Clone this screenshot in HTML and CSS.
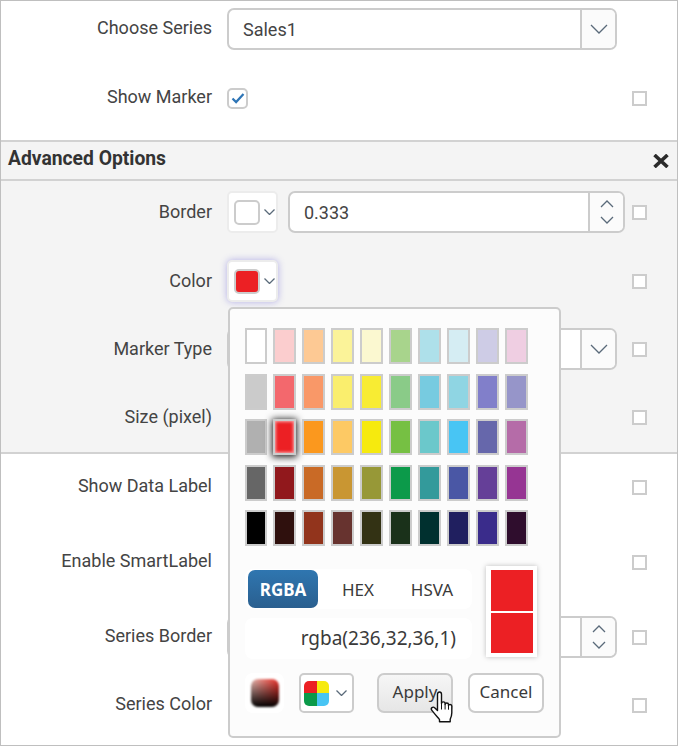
FILE: index.html
```html
<!DOCTYPE html>
<html lang="en">
<head>
    <meta charset="UTF-8">
    <meta name="viewport" content="width=device-width, initial-scale=1.0">
    <title>Series Options</title>
    <link rel="stylesheet" href="styles.css">
</head>
<body>
<div class="panel">
    <div class="section first">
        <div class="row">
            <label class="label">Choose Series</label>
            <div class="field wide">
                <span class="value">Sales1</span>
                <span class="field-btn">
                    <svg width="18" height="10" viewBox="0 0 18 10"><path d="M1 1l8 8 8-8"/></svg>
                </span>
            </div>
        </div>
        <div class="row gap-l">
            <label class="label">Show Marker</label>
            <span class="check">
                <svg width="14" height="12" viewBox="0 0 14 12"><path d="M1.5 6.500l3.600 3.600L12.500 2"/></svg>
            </span>
            <span class="tick"></span>
        </div>
    </div>

    <div class="band-title">
        <span>Advanced Options</span>
        <svg width="16" height="14" viewBox="0 0 16 14"><path d="M1.500 1l13 12M14.500 1l-13 12"/></svg>
    </div>

    <div class="section band">
        <div class="row">
            <label class="label">Border</label>
            <span class="swatch-btn">
                <span class="swatch"></span>
                <svg width="11" height="6" viewBox="0 0 11 6"><path d="M.5 .5l5 5 5-5"/></svg>
            </span>
            <div class="field spin-field">
                <span class="value">0.333</span>
                <span class="field-btn spin">
                    <svg width="14" height="8" viewBox="0 0 14 8"><path d="M1 7l6-6 6 6"/></svg>
                    <svg width="14" height="8" viewBox="0 0 14 8"><path d="M1 1l6 6 6-6"/></svg>
                </span>
            </div>
            <span class="tick"></span>
        </div>
        <div class="row gap-m">
            <label class="label">Color</label>
            <span class="swatch-btn active">
                <span class="swatch red"></span>
                <svg width="11" height="6" viewBox="0 0 11 6"><path d="M.5 .5l5 5 5-5"/></svg>
            </span>
            <span class="tick"></span>
        </div>
        <div class="row gap-s">
            <label class="label">Marker Type</label>
            <div class="field wide">
                <span class="field-btn">
                    <svg width="18" height="10" viewBox="0 0 18 10"><path d="M1 1l8 8 8-8"/></svg>
                </span>
            </div>
            <span class="tick"></span>
        </div>
        <div class="row gap-s">
            <label class="label">Size (pixel)</label>
            <span class="tick"></span>
        </div>
    </div>

    <div class="section last">
        <div class="row">
            <label class="label">Show Data Label</label>
            <span class="tick"></span>
        </div>
        <div class="row gap-xl">
            <label class="label">Enable SmartLabel</label>
            <span class="tick"></span>
        </div>
        <div class="row gap-xl">
            <label class="label">Series Border</label>
            <div class="field wide">
                <span class="field-btn spin">
                    <svg width="14" height="8" viewBox="0 0 14 8"><path d="M1 7l6-6 6 6"/></svg>
                    <svg width="14" height="8" viewBox="0 0 14 8"><path d="M1 1l6 6 6-6"/></svg>
                </span>
            </div>
            <span class="tick"></span>
        </div>
        <div class="row gap-s">
            <label class="label">Series Color</label>
            <span class="tick"></span>
        </div>
    </div>

    <!-- color picker popup -->
    <div class="picker">
        <div class="palette">
            <span class="cell" style="background:#ffffff"></span>
            <span class="cell" style="background:#fbcdce"></span>
            <span class="cell" style="background:#fdc994"></span>
            <span class="cell" style="background:#fbf399"></span>
            <span class="cell" style="background:#fbf8d0"></span>
            <span class="cell" style="background:#a8d48c"></span>
            <span class="cell" style="background:#aee0ea"></span>
            <span class="cell" style="background:#d5edf3"></span>
            <span class="cell" style="background:#cecce6"></span>
            <span class="cell" style="background:#efcee2"></span>

            <span class="cell" style="background:#cbcbcb"></span>
            <span class="cell" style="background:#f3686d"></span>
            <span class="cell" style="background:#f99868"></span>
            <span class="cell" style="background:#faee6d"></span>
            <span class="cell" style="background:#f8ec33"></span>
            <span class="cell" style="background:#8acb88"></span>
            <span class="cell" style="background:#77cbe0"></span>
            <span class="cell" style="background:#8fd5e3"></span>
            <span class="cell" style="background:#817fca"></span>
            <span class="cell" style="background:#9695c9"></span>

            <span class="cell" style="background:#b0b0b0"></span>
            <span class="cell selected" style="background:#ec2024"></span>
            <span class="cell" style="background:#fb981e"></span>
            <span class="cell" style="background:#fdc964"></span>
            <span class="cell" style="background:#f6ea0e"></span>
            <span class="cell" style="background:#76c043"></span>
            <span class="cell" style="background:#6bc8cb"></span>
            <span class="cell" style="background:#48c5f4"></span>
            <span class="cell" style="background:#6667ab"></span>
            <span class="cell" style="background:#b56ca8"></span>

            <span class="cell" style="background:#666666"></span>
            <span class="cell" style="background:#91181c"></span>
            <span class="cell" style="background:#c96a26"></span>
            <span class="cell" style="background:#c99632"></span>
            <span class="cell" style="background:#979837"></span>
            <span class="cell" style="background:#0c9a4a"></span>
            <span class="cell" style="background:#339a9b"></span>
            <span class="cell" style="background:#4a57a5"></span>
            <span class="cell" style="background:#653f98"></span>
            <span class="cell" style="background:#963593"></span>

            <span class="cell" style="background:#000000"></span>
            <span class="cell" style="background:#2f100d"></span>
            <span class="cell" style="background:#92341c"></span>
            <span class="cell" style="background:#67332f"></span>
            <span class="cell" style="background:#333214"></span>
            <span class="cell" style="background:#1a311a"></span>
            <span class="cell" style="background:#00302f"></span>
            <span class="cell" style="background:#201f5f"></span>
            <span class="cell" style="background:#3a2c8b"></span>
            <span class="cell" style="background:#2f0d2d"></span>
        </div>

        <div class="format-area">
            <div class="format-left">
                <div class="tabs">
                    <span class="tab on">RGBA</span>
                    <span class="tab">HEX</span>
                    <span class="tab">HSVA</span>
                </div>
                <div class="color-value">rgba(236,32,36,1)</div>
            </div>
            <div class="preview">
                <span></span>
                <span></span>
            </div>
        </div>

        <div class="picker-foot">
            <span class="grad-tile"><span class="grad"></span></span>
            <span class="mode-btn">
                <span class="quad">
                    <i style="background:#ec2024"></i>
                    <i style="background:#f6ea0e"></i>
                    <i style="background:#0c9a4a"></i>
                    <i style="background:#48c5f4"></i>
                </span>
                <svg width="11" height="6" viewBox="0 0 11 6"><path d="M.5 .5l5 5 5-5"/></svg>
            </span>
            <button class="btn hover">Apply</button>
            <button class="btn">Cancel</button>
        </div>
    </div>

    <svg class="cursor" width="26" height="33" viewBox="0 0 26 33">
        <path d="M8.500 3.200c0-3 4-3 4 0v9.300c0-2.200 3.600-2.200 3.600 0v1c0-2 3.400-2 3.400 0v1.200c0-1.800 3.300-1.600 3.300 .4v6.600c0 3-.7 4.600-1.600 6.600v2.500H10.500v-2.200c-1.800-2.200-4-4.600-7.600-9.200-1.800-2.400 1-4.300 3-2.500l2.600 2.600z"/>
        <path d="M12.500 12.500v6M16.100 13.500v5M19.500 14.700v4"/>
    </svg>
</div>
</body>
</html>
```

FILE: styles.css
```css
html, body {
    margin: 0;
    padding: 0;
    background-color: #fff;
}

.panel {
    position: relative;
    box-sizing: border-box;
    width: 678px;
    height: 746px;
    border: 1px solid #bfbfbf;
    font-family: Roboto, sans-serif;
    font-size: 18px;
    color: #444;
    overflow: hidden;
}

.section {
    padding-right: 30px;
}

.section.first {
    padding-top: 7px;
    height: 132px;
}

.section.band {
    padding-top: 10px;
    height: 261px;
    background-color: #f4f4f4;
    border-bottom: 2px solid #d2d2d2;
}

.section.band .label {
    margin-top: -1px;
}

.section.last {
    padding-top: 12px;
}

.band-title {
    display: flex;
    justify-content: space-between;
    align-items: center;
    height: 37px;
    padding: 0 8px 0 7px;
    background-color: #f4f4f4;
    border-top: 2px solid #d2d2d2;
    border-bottom: 2px solid #d2d2d2;
    font-size: 19.3px;
    font-weight: 700;
    color: #333;
}

.band-title span {
    margin-top: -4px;
}

.band-title svg path {
    fill: none;
    stroke: #2b2b2b;
    stroke-width: 3.6;
}

.row {
    display: flex;
    align-items: center;
    height: 42px;
}

.gap-l {
    margin-top: 27px;
}

.gap-m {
    margin-top: 27px;
}

.gap-s {
    margin-top: 26px;
}

.gap-xl {
    margin-top: 33px;
}

.label {
    width: 211px;
    margin-right: 15px;
    margin-top: -3px;
    text-align: right;
    flex: none;
}

.tick {
    width: 15px;
    height: 15px;
    box-sizing: border-box;
    margin-left: auto;
    background-color: #fff;
    border: 2px solid #ccc;
    flex: none;
}

.check {
    display: flex;
    justify-content: center;
    align-items: center;
    box-sizing: border-box;
    width: 21px;
    height: 21px;
    background-color: #fff;
    border: 2px solid #ccc;
    border-radius: 5px;
}

.check path {
    fill: none;
    stroke: #2e75b6;
    stroke-width: 2.2;
}

.field {
    display: flex;
    align-items: center;
    justify-content: space-between;
    box-sizing: border-box;
    height: 42px;
    background-color: #fff;
    border: 2px solid #ccc;
    border-radius: 7px;
}

.field.wide {
    width: 390px;
}

.field.spin-field {
    width: 337px;
    margin-left: 10px;
}

.value {
    padding-left: 14px;
}

.field-btn {
    display: flex;
    flex-direction: column;
    justify-content: center;
    align-items: center;
    width: 33px;
    height: 100%;
    margin-left: auto;
    background-color: #fbfbfb;
    border-left: 2px solid #ccc;
    border-radius: 0 5px 5px 0;
}

.field-btn path,
.swatch-btn path,
.mode-btn path {
    fill: none;
    stroke: #5a6a7a;
    stroke-width: 1.3;
}

.field-btn.spin {
    gap: 8px;
}

.swatch-btn {
    display: flex;
    align-items: center;
    gap: 4px;
    box-sizing: border-box;
    width: 51px;
    height: 42px;
    padding-left: 5px;
    background-color: #fff;
    border: 2px solid #ececec;
    border-radius: 5px;
}

.swatch-btn.active {
    box-shadow: 0 0 7px rgba(100, 90, 215, 0.45);
}

.swatch {
    box-sizing: border-box;
    width: 26px;
    height: 25px;
    background-color: #fff;
    border: 2px solid #ccc;
    border-radius: 5px;
}

.swatch.red {
    background-color: #ec2024;
}

.picker {
    position: absolute;
    left: 227px;
    top: 306px;
    box-sizing: border-box;
    width: 333px;
    height: 431px;
    padding: 19px 15px 0;
    background-color: #fcfcfc;
    border: 2px solid #ccc;
    border-radius: 5px;
}

.palette {
    display: grid;
    grid-template-columns: 22px repeat(9, 23px);
    grid-auto-rows: 36px;
    column-gap: 6px;
    row-gap: 9.5px;
}

.cell {
    box-sizing: border-box;
    border: 2px solid #ccc;
}

.cell.selected {
    box-shadow: 0 1px 7px 1px rgba(0, 0, 0, 0.9), inset 0 0 3px 1px rgba(255, 255, 255, 0.6);
}

.format-area {
    display: flex;
    margin-top: 23px;
}

.format-left {
    width: 227px;
}

.tabs {
    display: flex;
    box-sizing: border-box;
    height: 40px;
    padding: 1px 3px;
    background-color: #fff;
    border-radius: 8px;
    font-family: "Noto Sans", sans-serif;
    font-size: 17px;
    color: #3a3a3a;
}

.tab {
    display: flex;
    justify-content: center;
    align-items: center;
    width: 75px;
}

.tab.on {
    width: 71px;
    margin-right: 3px;
    background: linear-gradient(#2f76b0, #2a5f8f);
    border-radius: 7px;
    color: #fff;
    font-weight: 700;
}

.color-value {
    box-sizing: border-box;
    height: 41px;
    margin-top: 9px;
    padding-right: 16px;
    line-height: 41px;
    text-align: right;
    background-color: #fff;
    border-radius: 8px;
    font-family: "Noto Sans", sans-serif;
    font-size: 19px;
    color: #3a3a3a;
}

.preview {
    display: flex;
    flex-direction: column;
    gap: 2px;
    box-sizing: border-box;
    width: 51px;
    height: 91px;
    margin-left: 14px;
    margin-top: -3px;
    padding: 4px 4px 4px 5px;
    background-color: #fff;
    box-shadow: 0 0 5px rgba(0, 0, 0, 0.25);
}

.preview span {
    flex: 1;
    background-color: #ec2024;
}

.picker-foot {
    display: flex;
    margin-top: 14px;
}

.grad-tile {
    display: flex;
    justify-content: center;
    align-items: center;
    width: 39px;
    height: 40px;
    background-color: #fff;
    border-radius: 8px;
}

.grad {
    width: 28px;
    height: 28px;
    border-radius: 7px;
    background: linear-gradient(to top, #000, rgba(0, 0, 0, 0)), linear-gradient(to right, #e6bcb4, #ec2f28);
    filter: blur(0.8px);
}

.mode-btn {
    display: flex;
    align-items: center;
    gap: 7px;
    box-sizing: border-box;
    width: 55px;
    height: 40px;
    margin-left: 15px;
    padding-left: 3px;
    background-color: #fff;
    border: 2px solid #ccc;
    border-radius: 5px;
}

.quad {
    display: grid;
    grid-template-columns: 1fr 1fr;
    grid-template-rows: 1fr 1fr;
    width: 25px;
    height: 25px;
    border-radius: 5px;
    overflow: hidden;
    filter: blur(0.4px);
}

.btn {
    box-sizing: border-box;
    width: 76px;
    height: 40px;
    margin-left: 15px;
    padding: 0 0 4px;
    background-color: #fff;
    border: 2px solid #ccc;
    border-radius: 7px;
    font-family: "Noto Sans", sans-serif;
    font-size: 17px;
    color: #3a3a3a;
}

.btn.hover {
    margin-left: 23px;
    background: linear-gradient(#f6f6f6, #e6e6e6);
}

.cursor {
    position: absolute;
    left: 428px;
    top: 690px;
}

.cursor path:first-child {
    fill: #fff;
    stroke: #111;
    stroke-width: 1.4;
    stroke-linejoin: round;
}

.cursor path:last-child {
    fill: none;
    stroke: #111;
    stroke-width: 1;
}
```
